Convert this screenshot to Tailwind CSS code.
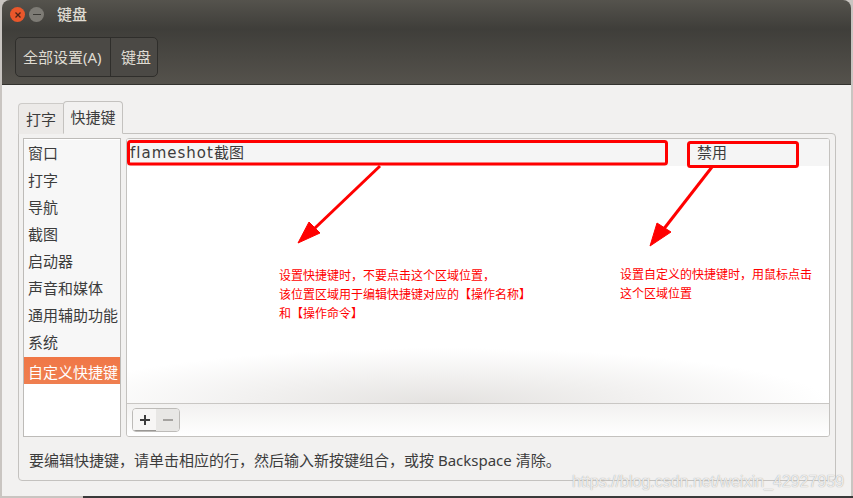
<!DOCTYPE html>
<html lang="zh-CN">
<head>
  <meta charset="UTF-8" />
  <title>键盘</title>
  <script src="https://cdn.jsdelivr.net/npm/@tailwindcss/browser@4"></script>
</head>
<body class="relative w-[853px] h-[498px] overflow-hidden bg-[#c9c5c1] font-['Noto_Sans','Noto_Sans_CJK_SC',sans-serif] text-[15px] text-[#3c3c3c]">

  <div class="ml-[2px] w-[849px] h-[496px] flex flex-col rounded-t-[8px] overflow-hidden">
    <!-- title bar -->
    <div class="h-[29px] bg-gradient-to-b from-[#55534d] to-[#3f3e3a] flex items-center pl-[8px] gap-[4px] shrink-0">
      <div class="w-[15px] h-[15px] rounded-full bg-[#e9572b] flex items-center justify-center">
        <svg width="8" height="8" viewBox="0 0 8 8"><path d="M1.5 1.5 6.5 6.5M6.5 1.5 1.5 6.5" stroke="#4a2418" stroke-width="1.3" /></svg>
      </div>
      <div class="w-[15px] h-[15px] rounded-full bg-[#7d7b75] flex items-center justify-center">
        <div class="w-[8px] h-[1.5px] bg-[#3a3935]"></div>
      </div>
      <span class="ml-[9px] text-[#dfdbd2] font-medium">键盘</span>
    </div>
    <!-- toolbar -->
    <div class="h-[56px] bg-gradient-to-b from-[#3f3e3a] to-[#55524c] border-b border-[#33322e] pl-[13px] pt-[8px] shrink-0">
      <div class="inline-flex h-[40px] border border-[#2f2e2b] rounded-[5px] bg-[#4b4945] text-[#dfdbd2] items-center">
        <span class="w-[95px] pl-[7px] border-r border-[#2f2e2b] leading-[38px]">全部设置(A)</span>
        <span class="w-[46px] pl-[10px] whitespace-nowrap">键盘</span>
      </div>
    </div>
    <!-- content -->
    <div class="flex-1 bg-[#f2f1f0] pl-[16px] pr-[15px] pt-[16px] flex flex-col">
      <div class="flex items-end h-[33px] relative z-10 -mb-[1px]">
        <div class="w-[45px] h-[31px] flex items-center justify-center border border-r-0 border-b-0 border-[#cdcbc8] rounded-tl-[4px] bg-[#eceae8]">打字</div>
        <div class="w-[60px] h-[33px] flex items-center justify-center border border-b-[#f2f1f0] border-[#c4c2bf] rounded-t-[4px] bg-[#f2f1f0]">快捷键</div>
      </div>
      <div class="h-[348px] border border-[#c4c2bf] rounded-b-[4px] rounded-tr-[4px] pl-[4px] pr-[5px] pt-[4px] flex flex-col">
        <div class="flex gap-[5px] h-[299px] shrink-0">
          <!-- sidebar -->
          <div class="w-[98px] border border-[#bdbbb8] bg-white shrink-0 pt-[1px]">
            <div class="h-[27px] leading-[27px] pl-[4px] bg-[#f7f7f7]">窗口</div>
            <div class="h-[27px] leading-[27px] pl-[4px] bg-[#f7f7f7]">打字</div>
            <div class="h-[27px] leading-[27px] pl-[4px] bg-[#f7f7f7]">导航</div>
            <div class="h-[27px] leading-[27px] pl-[4px] bg-[#f7f7f7]">截图</div>
            <div class="h-[27px] leading-[27px] pl-[4px] bg-[#f7f7f7]">启动器</div>
            <div class="h-[27px] leading-[27px] pl-[4px] bg-[#f7f7f7]">声音和媒体</div>
            <div class="h-[27px] leading-[27px] pl-[4px] bg-[#f7f7f7]">通用辅助功能</div>
            <div class="h-[28px] leading-[27px] pl-[4px] bg-[#f7f7f7]">系统</div>
            <div class="h-[27px] leading-[30px] pl-[4px] bg-gradient-to-b from-[#f07746] to-[#ef7f50] text-white">自定义快捷键</div>
          </div>
          <!-- shortcut list -->
          <div class="flex-1 border border-[#c4c2bf] rounded-[3px] flex flex-col overflow-hidden">
            <div class="h-[264px] bg-white flex flex-col relative">
              <div class="h-[27px] bg-[#f5f5f5] flex items-center pl-[3px]">
                <span class="flex-1 mt-[2px] font-['DejaVu_Sans','Noto_Sans_CJK_SC',sans-serif]"><span class="tracking-[1px]">flameshot</span>截图</span>
                <span class="w-[132px]">禁用</span>
              </div>
              <div class="absolute left-0 right-0 bottom-0 h-[55px] bg-[radial-gradient(ellipse_55%_100%_at_45%_100%,#e4e2e0,#ffffff)]"></div>
            </div>
            <div class="flex-1 border-t border-[#c9c7c4] bg-gradient-to-b from-[#f2f1f0] to-white pl-[5px] pt-[4px]">
              <div class="inline-flex h-[24px] border border-[#bdbbb8] rounded-[4px] overflow-hidden">
                <div class="w-[23px] bg-[#f7f6f5] border-b border-[#999794] flex items-center justify-center">
                  <svg width="12" height="12" viewBox="0 0 12 12"><path d="M6 1V11M1 6H11" stroke="#3c3c3c" stroke-width="2" /></svg>
                </div>
                <div class="w-[23px] bg-[#e8e7e5] flex items-center justify-center">
                  <svg width="12" height="12" viewBox="0 0 12 12"><path d="M1 6H11" stroke="#a5a3a0" stroke-width="2" /></svg>
                </div>
              </div>
            </div>
          </div>
        </div>
        <div class="pl-[6px] pt-[12px] whitespace-nowrap">要编辑快捷键，请单击相应的行，然后输入新按键组合，或按 Backspace 清除。</div>
      </div>
    </div>
  </div>
  <div class="ml-[83px] h-[2px] bg-[#3a3a3a]"></div>

  <!-- red annotations -->
  <svg class="absolute left-0 top-0" width="853" height="498" viewBox="0 0 853 498" fill="none">
    <rect x="128.5" y="141.5" width="538" height="22.5" rx="2" stroke="#ff0000" stroke-width="3" />
    <rect x="688.5" y="142.5" width="109" height="24" rx="2" stroke="#ff0000" stroke-width="3" />
    <path d="M380 166 315 228" stroke="#ff0000" stroke-width="3" />
    <path d="M298 243 309 222 320 233Z" fill="#ff0000" stroke="#ff0000" />
    <path d="M712 167 663 230" stroke="#ff0000" stroke-width="3" />
    <path d="M650 246 657 223 671 232Z" fill="#ff0000" stroke="#ff0000" />
  </svg>
  <div class="absolute left-[279px] top-[266px] text-[12px] leading-[19px] text-[#ff0000] whitespace-nowrap">设置快捷键时，不要点击这个区域位置，<br />该位置区域用于编辑快捷键对应的【操作名称】<br />和【操作命令】</div>
  <div class="absolute left-[620px] top-[265px] text-[12px] leading-[19px] text-[#ff0000] whitespace-nowrap">设置自定义的快捷键时，用鼠标点击<br />这个区域位置</div>

  <!-- watermark -->
  <div class="absolute left-[572px] top-[470px] font-['Liberation_Sans',sans-serif] text-[16px] text-white/80 [text-shadow:0_0_1px_#8f8d8a] whitespace-nowrap">https://blog.csdn.net/weixin_42927959</div>
</body>
</html>
